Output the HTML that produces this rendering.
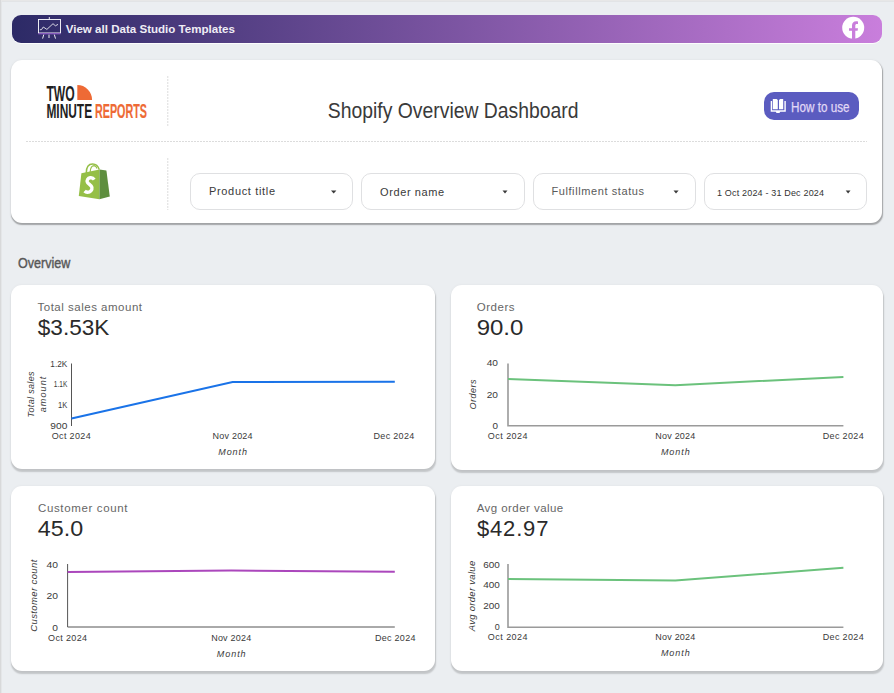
<!DOCTYPE html>
<html><head><meta charset="utf-8">
<style>
html,body{margin:0;padding:0;}
body{width:894px;height:693px;overflow:hidden;position:relative;background:#ebeef1;font-family:"Liberation Sans",sans-serif;}
.abs{position:absolute;}
#topb{left:0;top:0;width:894px;height:1px;background:#e7e7e7;}
#topb2{left:0;top:1px;width:894px;height:1px;background:#e2e4e6;}
#leftb{left:0;top:0;width:1px;height:693px;background:#d8d9da;}
#leftb2{left:1px;top:1px;width:1px;height:692px;background:#e4e6e8;}
#banner{left:12px;top:15px;width:869.5px;height:28px;border-radius:9px;box-shadow:0 1px 0 rgba(255,255,255,0.85);background:linear-gradient(90deg,#2c2a66 0%,#c97edc 100%);}
.card{position:absolute;background:#fff;border-radius:11px;box-shadow:0.6px 2.6px 1.4px rgba(0,0,0,0.17),0 0 3px rgba(0,0,0,0.05);}
#hdr{left:11px;top:59.6px;width:871px;height:163.7px;box-shadow:0.6px 1.3px 1.2px rgba(0,0,0,0.3),0 0 3px rgba(0,0,0,0.05);}
.flt{position:absolute;top:173px;height:35.2px;border:1px solid #dfe0e2;border-radius:10px;background:#fff;}
#btn{left:764px;top:92px;width:95px;height:28px;border-radius:10px;background:#5b5cc0;}
svg text{font-family:"Liberation Sans",sans-serif;}
</style></head>
<body>
<div class="abs" id="topb"></div><div class="abs" id="topb2"></div>
<div class="abs" id="leftb"></div><div class="abs" id="leftb2"></div>
<div class="abs" id="banner"></div>

<div class="card" id="hdr"></div>
<div class="flt" style="left:190.2px;width:161.3px;"></div>
<div class="flt" style="left:361.2px;width:161.4px;"></div>
<div class="flt" style="left:532.8px;width:160.9px;"></div>
<div class="flt" style="left:704.3px;width:161px;"></div>
<div class="abs" id="btn"></div>

<div class="card" style="left:11.3px;top:284.7px;width:424px;height:184.3px;"></div>
<div class="card" style="left:450.8px;top:285.4px;width:432.4px;height:184.2px;"></div>
<div class="card" style="left:11.3px;top:486.1px;width:424px;height:184.7px;"></div>
<div class="card" style="left:450.6px;top:486.4px;width:432.6px;height:185px;"></div>

<svg class="abs" style="left:0;top:0" width="894" height="693" viewBox="0 0 894 693">
  <!-- banner icon -->
  <g fill="none" stroke="#fff" stroke-width="0.9">
    <rect x="38.5" y="19.5" width="22" height="13.5"/>
    <line x1="49.3" y1="17" x2="49.3" y2="19.5"/>
    <polyline points="39.9,29.8 41.5,29.6 43.3,27 46.9,29.4 53,23.7 55.4,25.8 58,24.4" stroke-width="0.8"/>
    <line x1="43.8" y1="34.5" x2="42.6" y2="38.6"/>
    <line x1="49" y1="34.5" x2="49" y2="38"/>
    <line x1="54.3" y1="34.5" x2="55.5" y2="38.6"/>
  </g>
  <rect x="38.3" y="33" width="22.3" height="1.3" fill="#8a5ec0"/>
  <text x="65.7" y="33" font-size="10.4" font-weight="bold" fill="#efedf5" textLength="169.3" lengthAdjust="spacingAndGlyphs">View all Data Studio Templates</text>
  <!-- facebook -->
  <circle cx="853.2" cy="27.8" r="11" fill="#fff"/>
  <path d="M852 39.5 V30.8 H849 V28.2 H852 V25.6 C852 22.9 853.6 21.2 856.1 21.2 C856.9 21.2 857.5 21.3 858 21.4 V23.9 H856.9 C855.7 23.9 855.3 24.5 855.3 25.4 V28.2 H858 L857.6 30.8 H855.3 V39.5 Z" fill="#c97edc"/>

  <!-- logo -->
  <g font-weight="bold" fill="#1f1f1f">
    <text x="46.4" y="100.6" font-size="21.6" textLength="28.3" lengthAdjust="spacingAndGlyphs">TWO</text>
    <text x="46.4" y="118" font-size="20.5" textLength="45.7" lengthAdjust="spacingAndGlyphs">MINUTE</text>
    <text x="95" y="118" font-size="20.5" fill="#ee6a35" stroke="#ee6a35" stroke-width="0.2" textLength="52" lengthAdjust="spacingAndGlyphs">REPORTS</text>
  </g>
  <path d="M77.3 100 V85.1 A14.8 14.9 0 0 1 92.1 100 Z" fill="#ee6a35"/>
  <!-- dotted lines -->
  <g stroke="#dcdcdc" stroke-width="1" stroke-dasharray="2 1">
    <line x1="167.8" y1="76" x2="167.8" y2="127"/>
    <line x1="167.8" y1="158" x2="167.8" y2="210"/>
    <line x1="26" y1="141.5" x2="867" y2="141.5"/>
  </g>
  <!-- shopify bag -->
  <g>
    <path d="M86.3 173 C86.3 167 89 164 92.6 164 C96 164 98.3 166.5 99.2 169.5" fill="none" stroke="#95bf47" stroke-width="1.5"/>
    <path d="M90.2 172 C90.4 168 91.8 165.6 94.2 165.6 C95.6 165.8 96.5 167 97 168.5" fill="none" stroke="#95bf47" stroke-width="1.1"/>
    <path d="M81.4 173.2 L99.5 169.6 L99.4 199.2 L78.8 196 Z" fill="#95bf47"/>
    <path d="M99.5 169.6 L106.4 170.6 L109.8 196.4 L99.4 199.2 Z" fill="#5e8e3e"/>
    <path d="M94.2 179.6 C93.2 178 91.6 177.6 90.2 177.8 C87.8 178.2 86.7 180.4 87.4 182.2 C88.3 184.2 91.4 185 91.9 187.4 C92.4 190 90.2 192.4 87.4 192.3 C86.3 192.2 85.3 191.7 84.6 191" fill="none" stroke="#fff" stroke-width="3.4" stroke-linecap="butt"/>
  </g>
  <!-- title -->
  <text x="327.8" y="118.2" font-size="22" fill="#3a3a3a" textLength="250.8" lengthAdjust="spacingAndGlyphs">Shopify Overview Dashboard</text>
  <!-- how to use -->
  <g fill="#fff">
    <path d="M772.8 99 H776.6 L777.8 100 V109.2 H772.8 Z"/>
    <path d="M779 100 L780.2 99 H783.2 V109.2 H779 Z"/>
    <path d="M770.7 101 H772.1 V110.3 H784.4 V101 H785.8 V111.8 H780.3 L779.4 112.9 H776.6 L775.7 111.8 H770.7 Z"/>
  </g>
  <text x="791" y="112.1" font-size="14.6" fill="#e0d8f6" stroke="#e0d8f6" stroke-width="0.25" textLength="58.6" lengthAdjust="spacingAndGlyphs">How to use</text>

  <!-- filter texts -->
  <text x="209" y="195.2" font-size="11" fill="#3a3a3a" textLength="66" lengthAdjust="spacing">Product title</text>
  <text x="380.1" y="195.9" font-size="11" fill="#3a3a3a" textLength="64" lengthAdjust="spacing">Order name</text>
  <text x="551.4" y="195" font-size="11" fill="#5a5a5a" textLength="92.6" lengthAdjust="spacing">Fulfillment status</text>
  <text x="717" y="195.8" font-size="9" fill="#333" textLength="107" lengthAdjust="spacing">1 Oct 2024 - 31 Dec 2024</text>
  <g fill="#3a3a3a">
    <path d="M331 190.5 H336.4 L333.7 193.5 Z"/>
    <path d="M502.5 190.5 H507.5 L505 193.5 Z"/>
    <path d="M673.5 190.5 H678.6 L676 193.5 Z"/>
    <path d="M845.7 190.5 H850.5 L848.1 193.5 Z"/>
  </g>

  <!-- Overview -->
  <text x="18" y="267.8" font-size="15.5" fill="#585858" stroke="#585858" stroke-width="0.45" textLength="52.3" lengthAdjust="spacingAndGlyphs">Overview</text>

  <!-- card texts -->
  <g fill="#666">
    <text x="37.5" y="310.7" font-size="11.5" textLength="104.5" lengthAdjust="spacing">Total sales amount</text>
    <text x="476.7" y="311" font-size="11.5" textLength="37.8" lengthAdjust="spacing">Orders</text>
    <text x="38" y="512.1" font-size="11.5" textLength="89.5" lengthAdjust="spacing">Customer count</text>
    <text x="476.7" y="511.8" font-size="11.5" textLength="86.5" lengthAdjust="spacing">Avg order value</text>
  </g>
  <g fill="#2a2a2a">
    <text x="37.8" y="335.3" font-size="22" textLength="71.5" lengthAdjust="spacingAndGlyphs">$3.53K</text>
    <text x="476.7" y="335" font-size="22" textLength="46.7" lengthAdjust="spacingAndGlyphs">90.0</text>
    <text x="37.8" y="536.3" font-size="22" textLength="45.3" lengthAdjust="spacingAndGlyphs">45.0</text>
    <text x="477" y="536" font-size="22" textLength="71.4" lengthAdjust="spacing">$42.97</text>
  </g>

  <!-- chart 1 -->
  <line x1="71.5" y1="363.5" x2="71.5" y2="426" stroke="#555" stroke-width="1"/>
  <polyline points="71.5,418.5 232.6,382 394.8,381.7" fill="none" stroke="#1a73e8" stroke-width="2"/>
  <g fill="#3a3a3a" font-size="8.5" text-anchor="end">
    <text x="67.3" y="367.4" textLength="17" lengthAdjust="spacingAndGlyphs">1.2K</text>
    <text x="67.3" y="387.4" textLength="13.5" lengthAdjust="spacingAndGlyphs">1.1K</text>
    <text x="67.3" y="408" textLength="9.3" lengthAdjust="spacingAndGlyphs">1K</text>
    <text x="67.3" y="429.2" textLength="17" lengthAdjust="spacingAndGlyphs">900</text>
  </g>
  <g fill="#3a3a3a" font-size="9" text-anchor="middle">
    <text x="71.2" y="439" textLength="38.9" lengthAdjust="spacing">Oct 2024</text>
    <text x="232.6" y="439" textLength="40" lengthAdjust="spacing">Nov 2024</text>
    <text x="393.9" y="439" textLength="40.8" lengthAdjust="spacing">Dec 2024</text>
  </g>
  <text x="232.6" y="455" font-size="9" font-style="italic" fill="#3a3a3a" text-anchor="middle" textLength="28.8" lengthAdjust="spacing">Month</text>
  <g fill="#3a3a3a" font-size="9" font-style="italic" text-anchor="middle">
    <text transform="translate(34.0,394.5) rotate(-90)" textLength="46" lengthAdjust="spacing">Total sales</text>
    <text transform="translate(45.9,394.5) rotate(-90)" textLength="35.7" lengthAdjust="spacing">amount</text>
  </g>

  <!-- chart 2 -->
  <path d="M508 363.5 V425.7 H843.4" fill="none" stroke="#9a9a9a" stroke-width="1.6"/>
  <polyline points="508,378.9 675.3,385.2 843.4,377" fill="none" stroke="#6bc27c" stroke-width="2"/>
  <g fill="#3a3a3a" font-size="8.5" text-anchor="end">
    <text x="498" y="366.3" textLength="11.3" lengthAdjust="spacingAndGlyphs">40</text>
    <text x="498" y="397.6" textLength="11.3" lengthAdjust="spacingAndGlyphs">20</text>
    <text x="498" y="429.2" textLength="5.5" lengthAdjust="spacingAndGlyphs">0</text>
  </g>
  <g fill="#3a3a3a" font-size="9" text-anchor="middle">
    <text x="507.7" y="439.2" textLength="39.7" lengthAdjust="spacing">Oct 2024</text>
    <text x="675.3" y="439.2" textLength="40" lengthAdjust="spacing">Nov 2024</text>
    <text x="843.2" y="439.2" textLength="41" lengthAdjust="spacing">Dec 2024</text>
  </g>
  <text x="675.3" y="455" font-size="9" font-style="italic" fill="#3a3a3a" text-anchor="middle" textLength="28.8" lengthAdjust="spacing">Month</text>
  <text transform="translate(476,394.5) rotate(-90)" font-size="9" font-style="italic" fill="#3a3a3a" text-anchor="middle" textLength="30" lengthAdjust="spacing">Orders</text>

  <!-- chart 3 -->
  <path d="M67.6 564 V627 H394.8" fill="none" stroke="#555" stroke-width="1"/>
  <polyline points="67.6,572 231.2,570.5 394.8,571.8" fill="none" stroke="#ab47bc" stroke-width="2"/>
  <g fill="#3a3a3a" font-size="8.5" text-anchor="end">
    <text x="58" y="568.2" textLength="11.5" lengthAdjust="spacingAndGlyphs">40</text>
    <text x="58" y="599" textLength="11.5" lengthAdjust="spacingAndGlyphs">20</text>
    <text x="58" y="630.5" textLength="5.7" lengthAdjust="spacingAndGlyphs">0</text>
  </g>
  <g fill="#3a3a3a" font-size="9" text-anchor="middle">
    <text x="67.6" y="641" textLength="39" lengthAdjust="spacing">Oct 2024</text>
    <text x="231.2" y="641" textLength="40" lengthAdjust="spacing">Nov 2024</text>
    <text x="395.2" y="641" textLength="40.5" lengthAdjust="spacing">Dec 2024</text>
  </g>
  <text x="231.2" y="657" font-size="9" font-style="italic" fill="#3a3a3a" text-anchor="middle" textLength="28.8" lengthAdjust="spacing">Month</text>
  <text transform="translate(36.5,595.7) rotate(-90)" font-size="9.5" font-style="italic" fill="#3a3a3a" text-anchor="middle" textLength="72" lengthAdjust="spacing">Customer count</text>

  <!-- chart 4 -->
  <path d="M508 564 V627.3 H843.4" fill="none" stroke="#9a9a9a" stroke-width="1.6"/>
  <polyline points="508,579 675.3,580.5 843.4,567.7" fill="none" stroke="#6bc27c" stroke-width="2"/>
  <g fill="#3a3a3a" font-size="8.5" text-anchor="end">
    <text x="499.8" y="567.5" textLength="16.6" lengthAdjust="spacingAndGlyphs">600</text>
    <text x="499.8" y="588.2" textLength="16.6" lengthAdjust="spacingAndGlyphs">400</text>
    <text x="499.8" y="609.3" textLength="16.6" lengthAdjust="spacingAndGlyphs">200</text>
    <text x="499.8" y="630.3" textLength="5" lengthAdjust="spacingAndGlyphs">0</text>
  </g>
  <g fill="#3a3a3a" font-size="9" text-anchor="middle">
    <text x="507.7" y="640.2" textLength="39.7" lengthAdjust="spacing">Oct 2024</text>
    <text x="675.3" y="640.2" textLength="40" lengthAdjust="spacing">Nov 2024</text>
    <text x="843.2" y="640.2" textLength="41" lengthAdjust="spacing">Dec 2024</text>
  </g>
  <text x="675.3" y="656" font-size="9" font-style="italic" fill="#3a3a3a" text-anchor="middle" textLength="28.8" lengthAdjust="spacing">Month</text>
  <text transform="translate(474.5,596) rotate(-90)" font-size="9.5" font-style="italic" fill="#3a3a3a" text-anchor="middle" textLength="70.5" lengthAdjust="spacing">Avg order value</text>
</svg>
</body></html>
